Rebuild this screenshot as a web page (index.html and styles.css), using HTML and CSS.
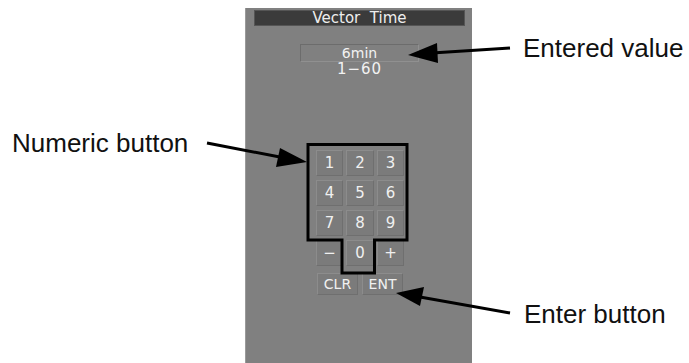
FILE: index.html
```html
<!DOCTYPE html>
<html>
<head>
<meta charset="utf-8">
<link rel="stylesheet" href="styles.css">
</head>
<body>
<div class="stage">
  <div class="panel">
    <div class="title">Vector&nbsp; Time</div>
    <div class="value-box">6min</div>
    <div class="range">1−60</div>
    <div class="keypad">
      <div class="key">1</div><div class="key">2</div><div class="key">3</div>
      <div class="key">4</div><div class="key">5</div><div class="key">6</div>
      <div class="key">7</div><div class="key">8</div><div class="key">9</div>
      <div class="key">−</div><div class="key">0</div><div class="key">+</div>
    </div>
    <div class="actions">
      <div class="key wide">CLR</div><div class="key wide">ENT</div>
    </div>
  </div>

  <svg class="annotations" width="689" height="363" viewBox="0 0 689 363">
    <polygon points="308,144.5 407,144.5 407,240 374.5,240 374.5,273 342,273 342,240 308,240" fill="none" stroke="#000" stroke-width="3"/>
    <line x1="510" y1="48" x2="432" y2="53" stroke="#000" stroke-width="3"/>
    <polygon points="408,55 437,43 438,63" fill="#000"/>
    <line x1="207" y1="143" x2="285" y2="158" stroke="#000" stroke-width="3"/>
    <polygon points="307,162 280,148 276,167" fill="#000"/>
    <line x1="510" y1="313" x2="420" y2="297" stroke="#000" stroke-width="3"/>
    <polygon points="396,293 424,287 420,306" fill="#000"/>
  </svg>

  <div class="label label-numeric">Numeric button</div>
  <div class="label label-entered">Entered value</div>
  <div class="label label-enter">Enter button</div>
</div>
</body>
</html>
```

FILE: styles.css
```css
html, body {
  margin: 0;
  padding: 0;
  background: #ffffff;
}

.stage {
  position: relative;
  width: 689px;
  height: 363px;
  overflow: hidden;
  font-family: "DejaVu Sans", "Liberation Sans", sans-serif;
}

.panel {
  margin-left: 245px;
  padding-top: 2px;
  margin-top: 8px;
  width: 226px;
  height: 353px;
  background: #808080;
  border-left: 1px solid #9a9a9a;
  display: flex;
  flex-direction: column;
  align-items: flex-start;
}

.title {
  margin-left: 8px;
  width: 209px;
  height: 14px;
  background: #3b3b3b;
  border: 1px solid #555555;
  color: #eeeeee;
  font-size: 15px;
  line-height: 14px;
  text-align: center;
}

.value-box {
  margin-top: 18px;
  margin-left: 54px;
  width: 117px;
  height: 16px;
  border: 1px solid #6c6c6c;
  border-right-color: #909090;
  border-bottom-color: #909090;
  color: #f2f2f2;
  font-size: 14px;
  line-height: 17px;
  text-align: center;
}

.range {
  margin-left: 54px;
  width: 119px;
  color: #f2f2f2;
  font-size: 15px;
  line-height: 15px;
  letter-spacing: 1px;
  text-align: center;
}

.keypad {
  margin-top: 73px;
  margin-left: 70px;
  display: grid;
  grid-template-columns: 27px 28px 27px;
  grid-auto-rows: 26px;
  column-gap: 3px;
  row-gap: 4px;
}

.key {
  box-sizing: border-box;
  background: #7b7b7b;
  border: 1px solid #6f6f6f;
  border-top-color: #8c8c8c;
  border-left-color: #8c8c8c;
  color: #f0f0f0;
  font-size: 15px;
  display: flex;
  align-items: center;
  justify-content: center;
}

.actions {
  margin-top: 7px;
  margin-left: 71px;
  display: flex;
  gap: 4px;
}

.key.wide {
  width: 41px;
  height: 22px;
  font-size: 14px;
}

.annotations {
  position: absolute;
  left: 0;
  top: 0;
}

.label {
  position: absolute;
  font-family: "Liberation Sans", Arial, sans-serif;
  font-size: 26px;
  line-height: 30px;
  color: #111111;
  white-space: nowrap;
}

.label-numeric {
  left: 12px;
  top: 128px;
}

.label-entered {
  left: 523px;
  top: 33px;
}

.label-enter {
  left: 524px;
  top: 299px;
}
```
